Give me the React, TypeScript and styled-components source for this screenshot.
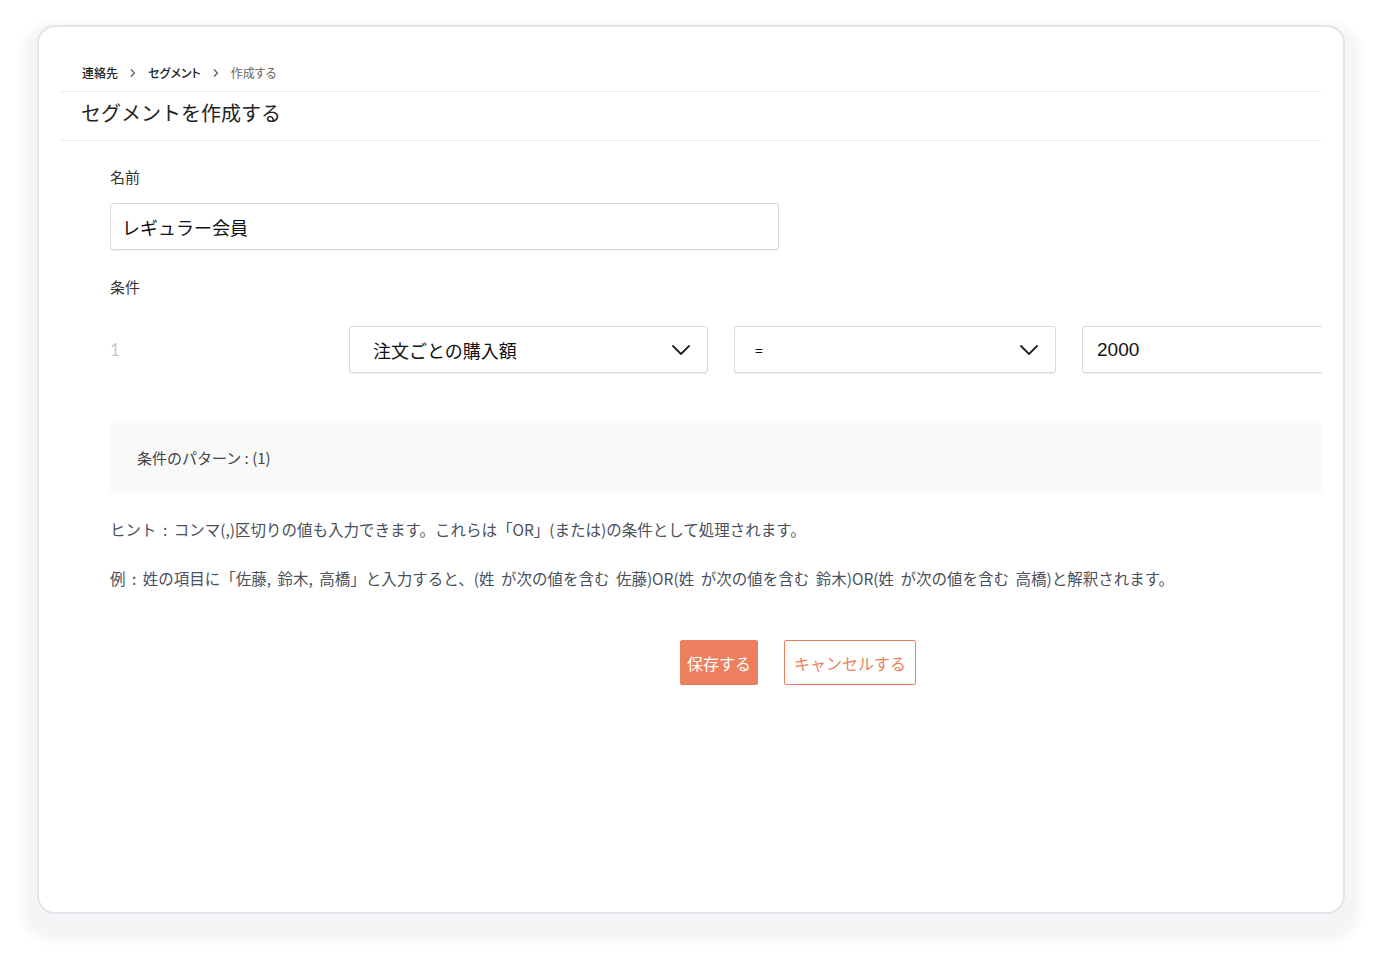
import React from "react";
import styled, { createGlobalStyle } from "styled-components";

const Global = createGlobalStyle`
  html, body { margin: 0; padding: 0; background: #ffffff; }
  body { font-family: "Noto Sans CJK JP", "Noto Sans", sans-serif; color: #222; }
  * { box-sizing: border-box; }
`;

const Page = styled.div`
  padding: 25px 37px 50px;
`;

const Card = styled.div`
  width: 1308px;
  height: 889px;
  background: #fff;
  border: 2px solid #e5e4ea;
  border-radius: 18px;
  box-shadow: 0 13px 8px 15px rgba(236, 236, 240, 0.55);
  padding: 0 21px;
`;

const Inner = styled.div`
  overflow: hidden;
  height: 100%;
`;

const Breadcrumb = styled.nav`
  display: flex;
  align-items: center;
  gap: 11px;
  padding: 37px 0 9px 22px;
  height: 65px;
  border-bottom: 1px solid #eef0f2;
  font-size: 12px;
  line-height: 18px;
  font-feature-settings: "palt";
`;

const Crumb = styled.span<{ $current?: boolean }>`
  color: ${(p) => (p.$current ? "#666" : "#222")};
  font-weight: ${(p) => (p.$current ? 400 : 500)};
`;

const Sep = styled.span`
  display: inline-flex;
  color: #555;
`;

const Title = styled.h1`
  margin: 0;
  padding: 7px 0 0 21px;
  height: 49px;
  border-bottom: 1px solid #eef0f2;
  font-size: 20px;
  line-height: 28px;
  font-weight: 400;
  color: #222;
`;

const Form = styled.div`
  padding-left: 50px;
  display: flex;
  flex-direction: column;
`;

const Label = styled.div<{ $top: number }>`
  margin-top: ${(p) => p.$top}px;
  font-size: 15px;
  line-height: 20px;
  color: #333;
`;

const Field = styled.div<{ $width: number; $pad: number; $size: number }>`
  flex: none;
  width: ${(p) => p.$width}px;
  height: 47px;
  border: 1px solid #d9d9d9;
  border-radius: 3px;
  box-shadow: 0 1px 0 rgba(0, 0, 0, 0.06);
  background: #fff;
  display: flex;
  align-items: center;
  justify-content: space-between;
  padding: 0 16px 0 ${(p) => p.$pad}px;
  font-size: ${(p) => p.$size}px;
  color: #111;
  white-space: nowrap;
`;

const NameField = styled(Field)`
  margin-top: 16px;
`;

const Row = styled.div`
  margin-top: 29px;
  display: flex;
  align-items: center;
  gap: 26px;
`;

const Index = styled.div`
  width: 213px;
  flex: none;
  font-family: "Lato", "Noto Sans", sans-serif;
  font-size: 17px;
  color: #c8c8c8;
`;

const Value = styled.span`
  font-family: "Liberation Sans", Arial, sans-serif;
`;

const Pattern = styled.div`
  margin-top: 50px;
  height: 69px;
  background: #f9f9f9;
  display: flex;
  align-items: center;
  padding-left: 27px;
  font-size: 15px;
  color: #444;
`;

const Hint = styled.p<{ $top: number }>`
  margin: ${(p) => p.$top}px 0 0;
  font-size: 15.5px;
  line-height: 22px;
  word-spacing: 3px;
  color: #4a4f5c;
  white-space: nowrap;
`;

const Actions = styled.div`
  margin-top: 51px;
  margin-left: 570px;
  display: flex;
  gap: 26px;
`;

const Button = styled.button<{ $primary?: boolean }>`
  height: 45px;
  padding: 0 ${(p) => (p.$primary ? 6 : 9)}px;
  border-radius: 2px;
  border: 1px solid #ec7f5e;
  background: ${(p) => (p.$primary ? "#ec7f5e" : "#fff")};
  color: ${(p) => (p.$primary ? "#fff" : "#ec7f5e")};
  font-family: "Noto Sans CJK JP", sans-serif;
  font-size: 16px;
  cursor: pointer;
`;

const Chevron = () => (
  <svg width="20" height="12" viewBox="0 0 20 12" fill="none">
    <path d="M2 2l8 8 8-8" stroke="#222" strokeWidth="1.8" strokeLinecap="round" strokeLinejoin="round" />
  </svg>
);

const Arrow = () => (
  <Sep>
    <svg width="8" height="10" viewBox="0 0 8 10" fill="none">
      <path d="M2 1.5l3.5 3.5L2 8.5" stroke="#555" strokeWidth="1.1" />
    </svg>
  </Sep>
);

export default function App() {
  return (
    <>
      <Global />
      <Page>
        <Card>
          <Inner>
            <Breadcrumb>
              <Crumb>連絡先</Crumb>
              <Arrow />
              <Crumb>セグメント</Crumb>
              <Arrow />
              <Crumb $current>作成する</Crumb>
            </Breadcrumb>
            <Title>セグメントを作成する</Title>
            <Form>
              <Label $top={26}>名前</Label>
              <NameField $width={669} $pad={11} $size={18}>
                レギュラー会員
              </NameField>
              <Label $top={27}>条件</Label>
              <Row>
                <Index>1</Index>
                <Field $width={359} $pad={23} $size={18}>
                  注文ごとの購入額
                  <Chevron />
                </Field>
                <Field $width={322} $pad={20} $size={14}>
                  =
                  <Chevron />
                </Field>
                <Field $width={322} $pad={14} $size={19}>
                  <Value>2000</Value>
                </Field>
              </Row>
              <Pattern>条件のパターン : (1)</Pattern>
              <Hint $top={26}>
                ヒント : コンマ(,)区切りの値も入力できます。これらは「OR」(または)の条件として処理されます。
              </Hint>
              <Hint $top={27}>
                例 : 姓の項目に「佐藤, 鈴木, 高橋」と入力すると、(姓 が次の値を含む 佐藤)OR(姓 が次の値を含む 鈴木)OR(姓 が次の値を含む 高橋)と解釈されます。
              </Hint>
              <Actions>
                <Button $primary>保存する</Button>
                <Button>キャンセルする</Button>
              </Actions>
            </Form>
          </Inner>
        </Card>
      </Page>
    </>
  );
}
